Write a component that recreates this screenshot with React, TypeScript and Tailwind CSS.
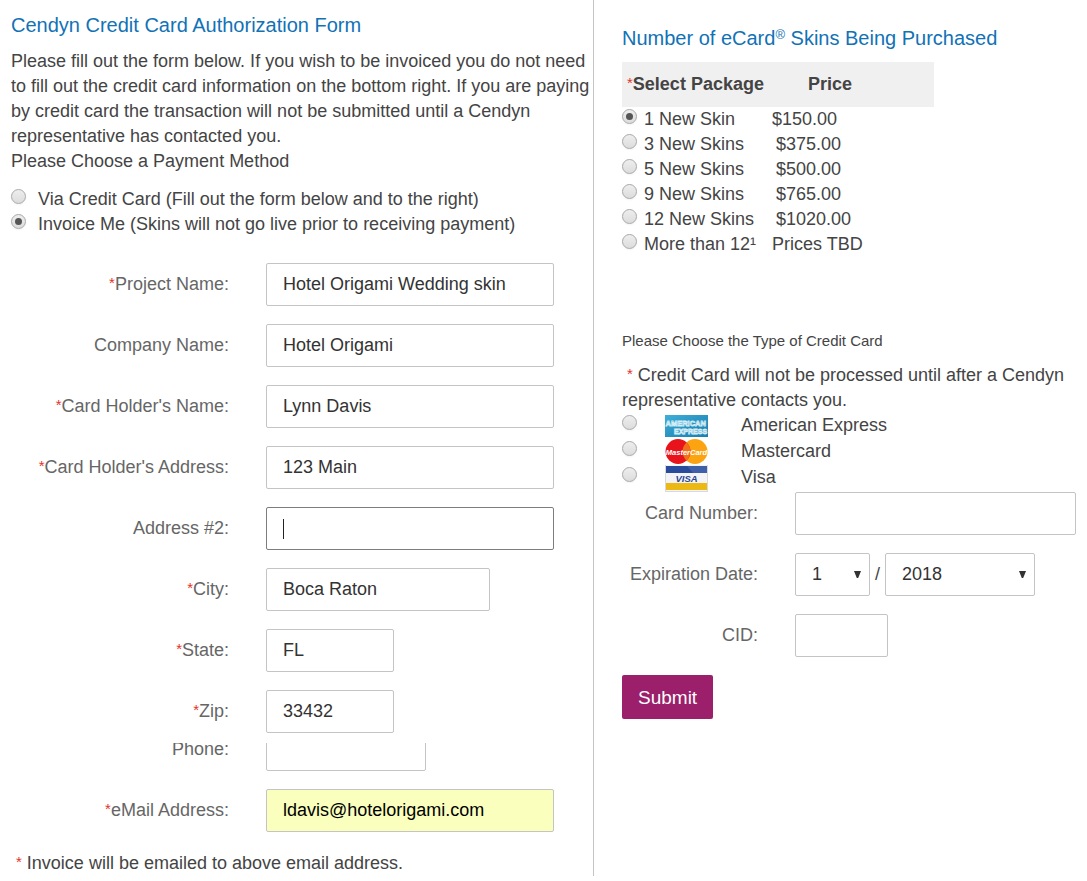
import { useState } from "react";
import type { ReactNode } from "react";

const packages = [
  { id: "p1", name: "1 New Skin", price: "$150.00" },
  { id: "p3", name: "3 New Skins", price: "$375.00", indent: true },
  { id: "p5", name: "5 New Skins", price: "$500.00", indent: true },
  { id: "p9", name: "9 New Skins", price: "$765.00", indent: true },
  { id: "p12", name: "12 New Skins", price: "$1020.00", indent: true },
  { id: "pmore", name: "More than 12¹", price: "Prices TBD" },
];

const inputClass =
  "block h-[43px] rounded-[2px] border border-[#c4c4c4] bg-white px-4 text-[#333] focus:outline-none";

const Star = () => (
  <span className="align-[2px] text-[15px] leading-none font-normal text-[#e4322b]">
    *
  </span>
);

type RadioProps = {
  id: string;
  name: string;
  checked: boolean;
  onChange: () => void;
};

const Radio = ({ id, name, checked, onChange }: RadioProps) => (
  <input
    type="radio"
    id={id}
    name={name}
    checked={checked}
    onChange={onChange}
    className="mt-[2px] grid size-[15px] shrink-0 appearance-none place-content-center rounded-full border border-[#a9a9a9] bg-linear-to-b from-[#eeeeee] to-[#dcdcdc] shadow-xs before:size-[7px] before:rounded-full checked:before:bg-[#555]"
  />
);

type RowProps = {
  label: string;
  htmlFor: string;
  required?: boolean;
  labelWidth?: string;
  children: ReactNode;
};

const Row = ({
  label,
  htmlFor,
  required,
  labelWidth = "w-[218px]",
  children,
}: RowProps) => (
  <div className="flex shrink-0 items-center gap-[37px]">
    <label
      htmlFor={htmlFor}
      className={`${labelWidth} shrink-0 text-right whitespace-nowrap text-[#666]`}
    >
      {required && <Star />}
      {label}
    </label>
    {children}
  </div>
);

type FieldProps = {
  id: string;
  label: string;
  value?: string;
  required?: boolean;
  width?: string;
};

const Field = ({ id, label, value, required, width = "w-72" }: FieldProps) => (
  <Row label={label} htmlFor={id} required={required}>
    <input id={id} defaultValue={value} className={`${inputClass} ${width}`} />
  </Row>
);

const Select = ({
  id,
  label,
  options,
  width,
}: {
  id: string;
  label: string;
  options: string[];
  width: string;
}) => (
  <div className={`relative ${width}`}>
    <select
      id={id}
      aria-label={label}
      className={`${inputClass} w-full appearance-none`}
    >
      {options.map((o) => (
        <option key={o}>{o}</option>
      ))}
    </select>
    <svg
      viewBox="0 0 7 7"
      className="pointer-events-none absolute top-[18px] right-[9px] size-[7px]"
    >
      <path d="M0 0h7L4.2 7H2.8z" fill="#333" />
    </svg>
  </div>
);

const AmexLogo = () => (
  <svg viewBox="0 0 43 26" className="h-[26px] w-[43px]">
    <defs>
      <linearGradient id="amex-blue" x1="0" y1="0" x2="1" y2="1">
        <stop offset="0" stopColor="#3fb0da" />
        <stop offset="0.5" stopColor="#2a94c2" />
        <stop offset="1" stopColor="#1b7fae" />
      </linearGradient>
    </defs>
    <rect y="2" width="43" height="22" fill="url(#amex-blue)" />
    <g
      fill="#2a8fbd"
      stroke="#d5edf7"
      strokeWidth="0.8"
      fontFamily="Liberation Sans"
      fontWeight="bold"
    >
      <text x="0.5" y="12.5" fontSize="7.5">
        AMERICAN
      </text>
      <text x="9" y="20.5" fontSize="7">
        EXPRESS
      </text>
    </g>
  </svg>
);

const MastercardLogo = () => (
  <svg viewBox="0 0 43 26" className="h-[26px] w-[43px]">
    <circle cx="30" cy="12.5" r="12.5" fill="#fca311" />
    <circle cx="13" cy="12.5" r="12.5" fill="#e8131b" />
    <path
      d="M21.5 3.4a12.5 12.5 0 0 1 0 18.2a12.5 12.5 0 0 1 0-18.2"
      fill="#f2701a"
    />
    <text
      x="21.5"
      y="15.5"
      textAnchor="middle"
      fill="#fff"
      fontFamily="Liberation Sans"
      fontWeight="bold"
      fontStyle="italic"
      fontSize="7.5"
    >
      MasterCard
    </text>
  </svg>
);

const VisaLogo = () => (
  <svg viewBox="0 0 43 27" className="h-[27px] w-[43px]">
    <rect width="43" height="27" fill="#d9d9d9" />
    <rect x="1" width="41" height="26" fill="#f4f4f6" />
    <rect x="1" y="1" width="41" height="7" fill="#2a4b9b" />
    <path d="M22 1h20v7H28z" fill="#3f5fa8" />
    <rect x="1" y="18" width="41" height="7" fill="#ecb914" />
    <text
      x="21.5"
      y="16.5"
      textAnchor="middle"
      fill="#2a4592"
      fontFamily="Liberation Sans"
      fontWeight="bold"
      fontStyle="italic"
      fontSize="9.5"
    >
      VISA
    </text>
  </svg>
);

const cards = [
  { id: "amex", name: "American Express", logo: <AmexLogo /> },
  { id: "mastercard", name: "Mastercard", logo: <MastercardLogo /> },
  { id: "visa", name: "Visa", logo: <VisaLogo /> },
];

const App = () => {
  const [method, setMethod] = useState("invoice");
  const [pack, setPack] = useState("p1");
  const [card, setCard] = useState("");

  return (
    <form
      onSubmit={(e) => e.preventDefault()}
      className="grid grid-cols-[594fr_493fr] bg-white font-['Liberation_Sans',Arial,sans-serif] text-[18px] leading-[25px] text-[#444]"
    >
      <section className="border-r border-[#c4c4c4] pt-[13px] pl-[11px]">
        <h1 className="text-xl leading-[25px] text-[#1172b6]">
          Cendyn Credit Card Authorization Form
        </h1>
        <p className="mt-[11px]">
          Please fill out the form below. If you wish to be invoiced you do not
          need to fill out the credit card information on the bottom right. If
          you are paying by credit card the transaction will not be submitted
          until a Cendyn representative has contacted you.
        </p>
        <p>Please Choose a Payment Method</p>

        <div className="mt-[13px]">
          <div className="flex gap-3">
            <Radio
              id="credit"
              name="method"
              checked={method === "credit"}
              onChange={() => setMethod("credit")}
            />
            <label htmlFor="credit">
              Via Credit Card (Fill out the form below and to the right)
            </label>
          </div>
          <div className="flex gap-3">
            <Radio
              id="invoice"
              name="method"
              checked={method === "invoice"}
              onChange={() => setMethod("invoice")}
            />
            <label htmlFor="invoice">
              Invoice Me (Skins will not go live prior to receiving payment)
            </label>
          </div>
        </div>

        <div className="mt-[26px] flex flex-col gap-[18px]">
          <Field
            id="project"
            label="Project Name:"
            value="Hotel Origami Wedding skin"
            required
          />
          <Field id="company" label="Company Name:" value="Hotel Origami" />
          <Field
            id="holder"
            label="Card Holder's Name:"
            value="Lynn Davis"
            required
          />
          <Field
            id="address"
            label="Card Holder's Address:"
            value="123 Main"
            required
          />
          <Row label="Address #2:" htmlFor="address2">
            <div className="relative">
              <input
                id="address2"
                className="block h-[43px] w-72 rounded-[2px] border border-[#7d7d7d] bg-white px-4 text-[#333] caret-transparent focus:outline-none"
              />
              {/* text cursor */}
              <span className="absolute top-3 left-[17px] h-5 w-px bg-[#222]" />
            </div>
          </Row>
          <Field
            id="city"
            label="City:"
            value="Boca Raton"
            width="w-56"
            required
          />
          <Field id="state" label="State:" value="FL" width="w-32" required />
          <Field id="zip" label="Zip:" value="33432" width="w-32" required />
        </div>

        {/* the top of the phone row is cut off */}
        <div className="mt-[10px] flex h-7 flex-col justify-end overflow-hidden">
          <Field id="phone" label="Phone:" width="w-40" />
        </div>

        <div className="mt-[18px]">
          <Row label="eMail Address:" htmlFor="email" required>
            <input
              id="email"
              type="email"
              defaultValue="ldavis@hotelorigami.com"
              className="block h-[43px] w-72 rounded-[2px] border border-[#c4c4c4] bg-[#faffbd] px-4 text-black focus:outline-none"
            />
          </Row>
        </div>
        <p className="mt-[19px] indent-[5px]">
          <Star /> Invoice will be emailed to above email address.
        </p>
      </section>

      <section className="pt-[26px] pr-[11px] pl-7">
        <h2 className="text-xl leading-[25px] text-[#1172b6]">
          Number of eCard<sup className="text-[13px] leading-none">®</sup> Skins
          Being Purchased
        </h2>

        <table className="mt-[11px] w-[312px] text-left">
          <thead>
            <tr className="h-[45px] bg-[#f0f0f0]">
              <th className="w-[150px] pl-[5px] font-bold whitespace-nowrap">
                <Star />
                Select Package
              </th>
              <th className="pl-9 font-bold">Price</th>
            </tr>
          </thead>
          <tbody>
            {packages.map((p) => (
              <tr key={p.id}>
                <td className="p-0">
                  <div className="flex gap-[7px] whitespace-nowrap">
                    <Radio
                      id={p.id}
                      name="package"
                      checked={pack === p.id}
                      onChange={() => setPack(p.id)}
                    />
                    <label htmlFor={p.id}>{p.name}</label>
                  </div>
                </td>
                <td className={p.indent ? "pl-1" : "p-0"}>{p.price}</td>
              </tr>
            ))}
          </tbody>
        </table>

        <p className="mt-[71px] text-[15px]">
          Please Choose the Type of Credit Card
        </p>
        <p className="mt-[10px] indent-[5px]">
          <Star /> Credit Card will not be processed until after a Cendyn
          representative contacts you.
        </p>

        <div>
          {cards.map((c) => (
            <div key={c.id} className="flex">
              <Radio
                id={c.id}
                name="card"
                checked={card === c.id}
                onChange={() => setCard(c.id)}
              />
              <label htmlFor={c.id} className="ml-7 flex gap-[33px]">
                {c.logo}
                {c.name}
              </label>
            </div>
          ))}
        </div>

        <div className="flex flex-col gap-[18px]">
          <Row label="Card Number:" htmlFor="number" labelWidth="w-[136px]">
            <input id="number" className={`${inputClass} w-full min-w-0`} />
          </Row>
          <Row label="Expiration Date:" htmlFor="month" labelWidth="w-[136px]">
            <div className="flex items-center gap-[5px]">
              <Select
                id="month"
                label="Expiration month"
                options={["1", "2", "3", "4", "5", "6", "7", "8", "9", "10", "11", "12"]}
                width="w-[75px]"
              />
              /
              <Select
                id="year"
                label="Expiration year"
                options={["2018", "2019", "2020", "2021", "2022"]}
                width="w-[150px]"
              />
            </div>
          </Row>
          <Row label="CID:" htmlFor="cid" labelWidth="w-[136px]">
            <input id="cid" className={`${inputClass} w-[93px]`} />
          </Row>
        </div>

        <button
          type="submit"
          className="mt-[18px] h-11 rounded-[2px] bg-[#9b1f6b] px-4 text-[19px] text-white"
        >
          Submit
        </button>
      </section>
    </form>
  );
};

export default App;
